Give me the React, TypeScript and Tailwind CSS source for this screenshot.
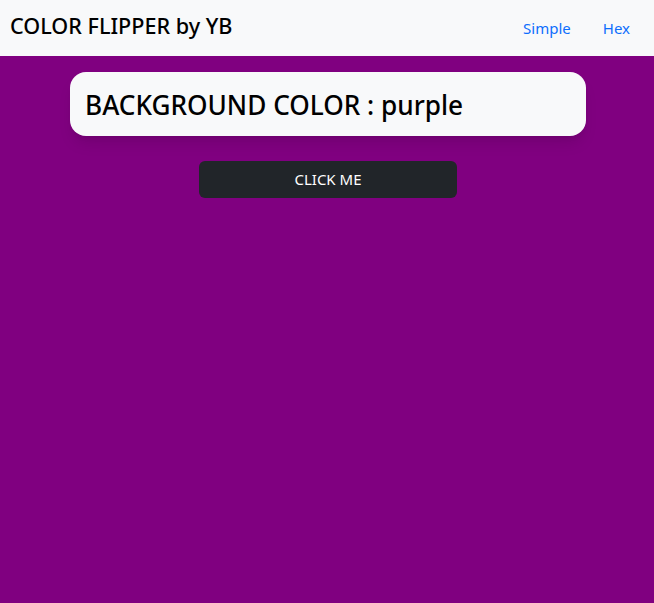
export default function App() {
  return (
    <div className="min-h-[603px] bg-[#800080] flex flex-col" style={{ fontFamily: '"Noto Sans", "Open Sans", sans-serif' }}>
      <nav className="h-[56px] bg-[#f8f9fa] flex items-center justify-between px-[10px]">
        <span className="text-[21.6px] font-medium text-black pb-[4px]">COLOR FLIPPER by YB</span>
        <div className="flex gap-[32px] pr-[14px] text-[15px] text-[#0d6efd]">
          <span>Simple</span>
          <span>Hex</span>
        </div>
      </nav>
      <div className="flex flex-col items-center pt-[16px]">
        <div className="ml-[2px] w-[516px] h-[64px] bg-[#f8f9fa] rounded-[16px] shadow-lg flex items-center pl-[15px] pr-[16px] pt-[4px]">
          <span className="text-[26.2px] font-medium text-black">BACKGROUND COLOR : purple</span>
        </div>
        <button className="ml-[2px] mt-[25px] w-[258px] h-[37px] bg-[#212529] rounded-[6px] text-white text-[15px]">CLICK ME</button>
      </div>
    </div>
  );
}
